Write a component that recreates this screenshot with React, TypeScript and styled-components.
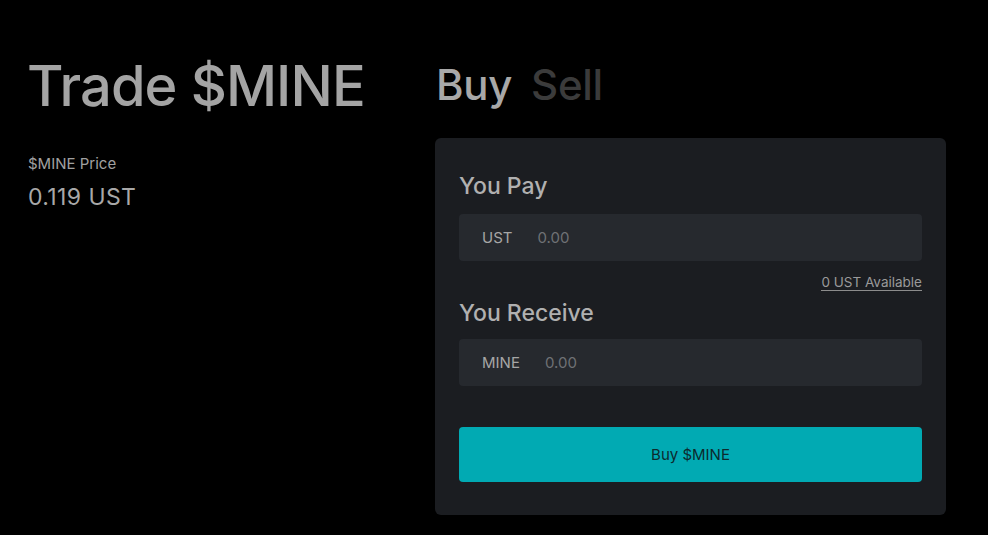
import styled, { createGlobalStyle } from 'styled-components';

const GlobalStyle = createGlobalStyle`
  html, body {
    margin: 0;
    padding: 0;
    background: #000;
  }
  body {
    font-family: Inter, "Liberation Sans", sans-serif;
    color: #a6a6a6;
  }
`;

const Page = styled.div`
  display: grid;
  grid-template-columns: 407px 512px;
  padding: 52px 0 0 27px;
  min-height: 535px;
  box-sizing: border-box;
`;

const Info = styled.div`
  display: flex;
  flex-direction: column;
`;

const Title = styled.h1`
  margin: 0;
  font-size: 56px;
  font-weight: 500;
  letter-spacing: -0.9px;
  line-height: 68px;
  color: #a4a4a4;
`;

const PriceLabel = styled.div`
  margin-top: 35px;
  padding-left: 1px;
  font-size: 15px;
  line-height: 18px;
  color: #a0a0a0;
`;

const PriceValue = styled.div`
  margin-top: 10px;
  padding-left: 1px;
  font-size: 23px;
  line-height: 28px;
  letter-spacing: 0.4px;
  color: #a8a8a8;
`;

const Trade = styled.div`
  display: flex;
  flex-direction: column;
  padding-left: 1px;
`;

const Tabs = styled.div`
  display: flex;
  gap: 19px;
  padding: 8px 0 0 1px;
  height: 86px;
  box-sizing: border-box;
  align-items: flex-start;
`;

const Tab = styled.button<{ $active?: boolean }>`
  background: none;
  border: 0;
  padding: 0;
  font-family: inherit;
  font-size: 42px;
  line-height: 50px;
  font-weight: 500;
  letter-spacing: -0.3px;
  color: ${(p) => (p.$active ? '#a8a8a8' : '#3b3b3b')};
  cursor: pointer;
`;

const Card = styled.div`
  background: #1b1d21;
  border-radius: 6px;
  padding: 34px 24px 33px;
  display: flex;
  flex-direction: column;
`;

const Heading = styled.h2<{ $gap?: number }>`
  margin: 0 0 ${(p) => p.$gap ?? 14}px;
  font-size: 23px;
  font-weight: 500;
  line-height: 28px;
  color: #b0b0b0;
`;

const Field = styled.label`
  display: flex;
  align-items: center;
  gap: 25px;
  height: 47px;
  padding: 0 23px;
  background: #26292e;
  border-radius: 4px;
  font-size: 15px;
`;

const Unit = styled.span`
  color: #a6a6a6;
`;

const Amount = styled.input`
  flex: 1;
  background: none;
  border: 0;
  outline: none;
  font-family: inherit;
  font-size: 15px;
  color: #a6a6a6;
  padding: 0;
  &::placeholder {
    color: #6f7175;
  }
`;

const Available = styled.div`
  align-self: flex-end;
  margin: 13px 0 8px;
  font-size: 13.5px;
  line-height: 16px;
  color: #9a9a9a;
  border-bottom: 1px solid #8c8c8c;
`;

const BuyButton = styled.button`
  margin-top: 41px;
  height: 55px;
  border: 0;
  border-radius: 4px;
  background: #01aab3;
  font-family: inherit;
  font-size: 15px;
  color: #0d2a2e;
  cursor: pointer;
`;

export default function App() {
  return (
    <>
      <GlobalStyle />
      <Page>
        <Info>
          <Title>Trade $MINE</Title>
          <PriceLabel>$MINE Price</PriceLabel>
          <PriceValue>0.119 UST</PriceValue>
        </Info>
        <Trade>
          <Tabs>
            <Tab $active>Buy</Tab>
            <Tab>Sell</Tab>
          </Tabs>
          <Card>
            <Heading>You Pay</Heading>
            <Field>
              <Unit>UST</Unit>
              <Amount placeholder="0.00" />
            </Field>
            <Available>0 UST Available</Available>
            <Heading $gap={12}>You Receive</Heading>
            <Field>
              <Unit>MINE</Unit>
              <Amount placeholder="0.00" />
            </Field>
            <BuyButton>Buy $MINE</BuyButton>
          </Card>
        </Trade>
      </Page>
    </>
  );
}
